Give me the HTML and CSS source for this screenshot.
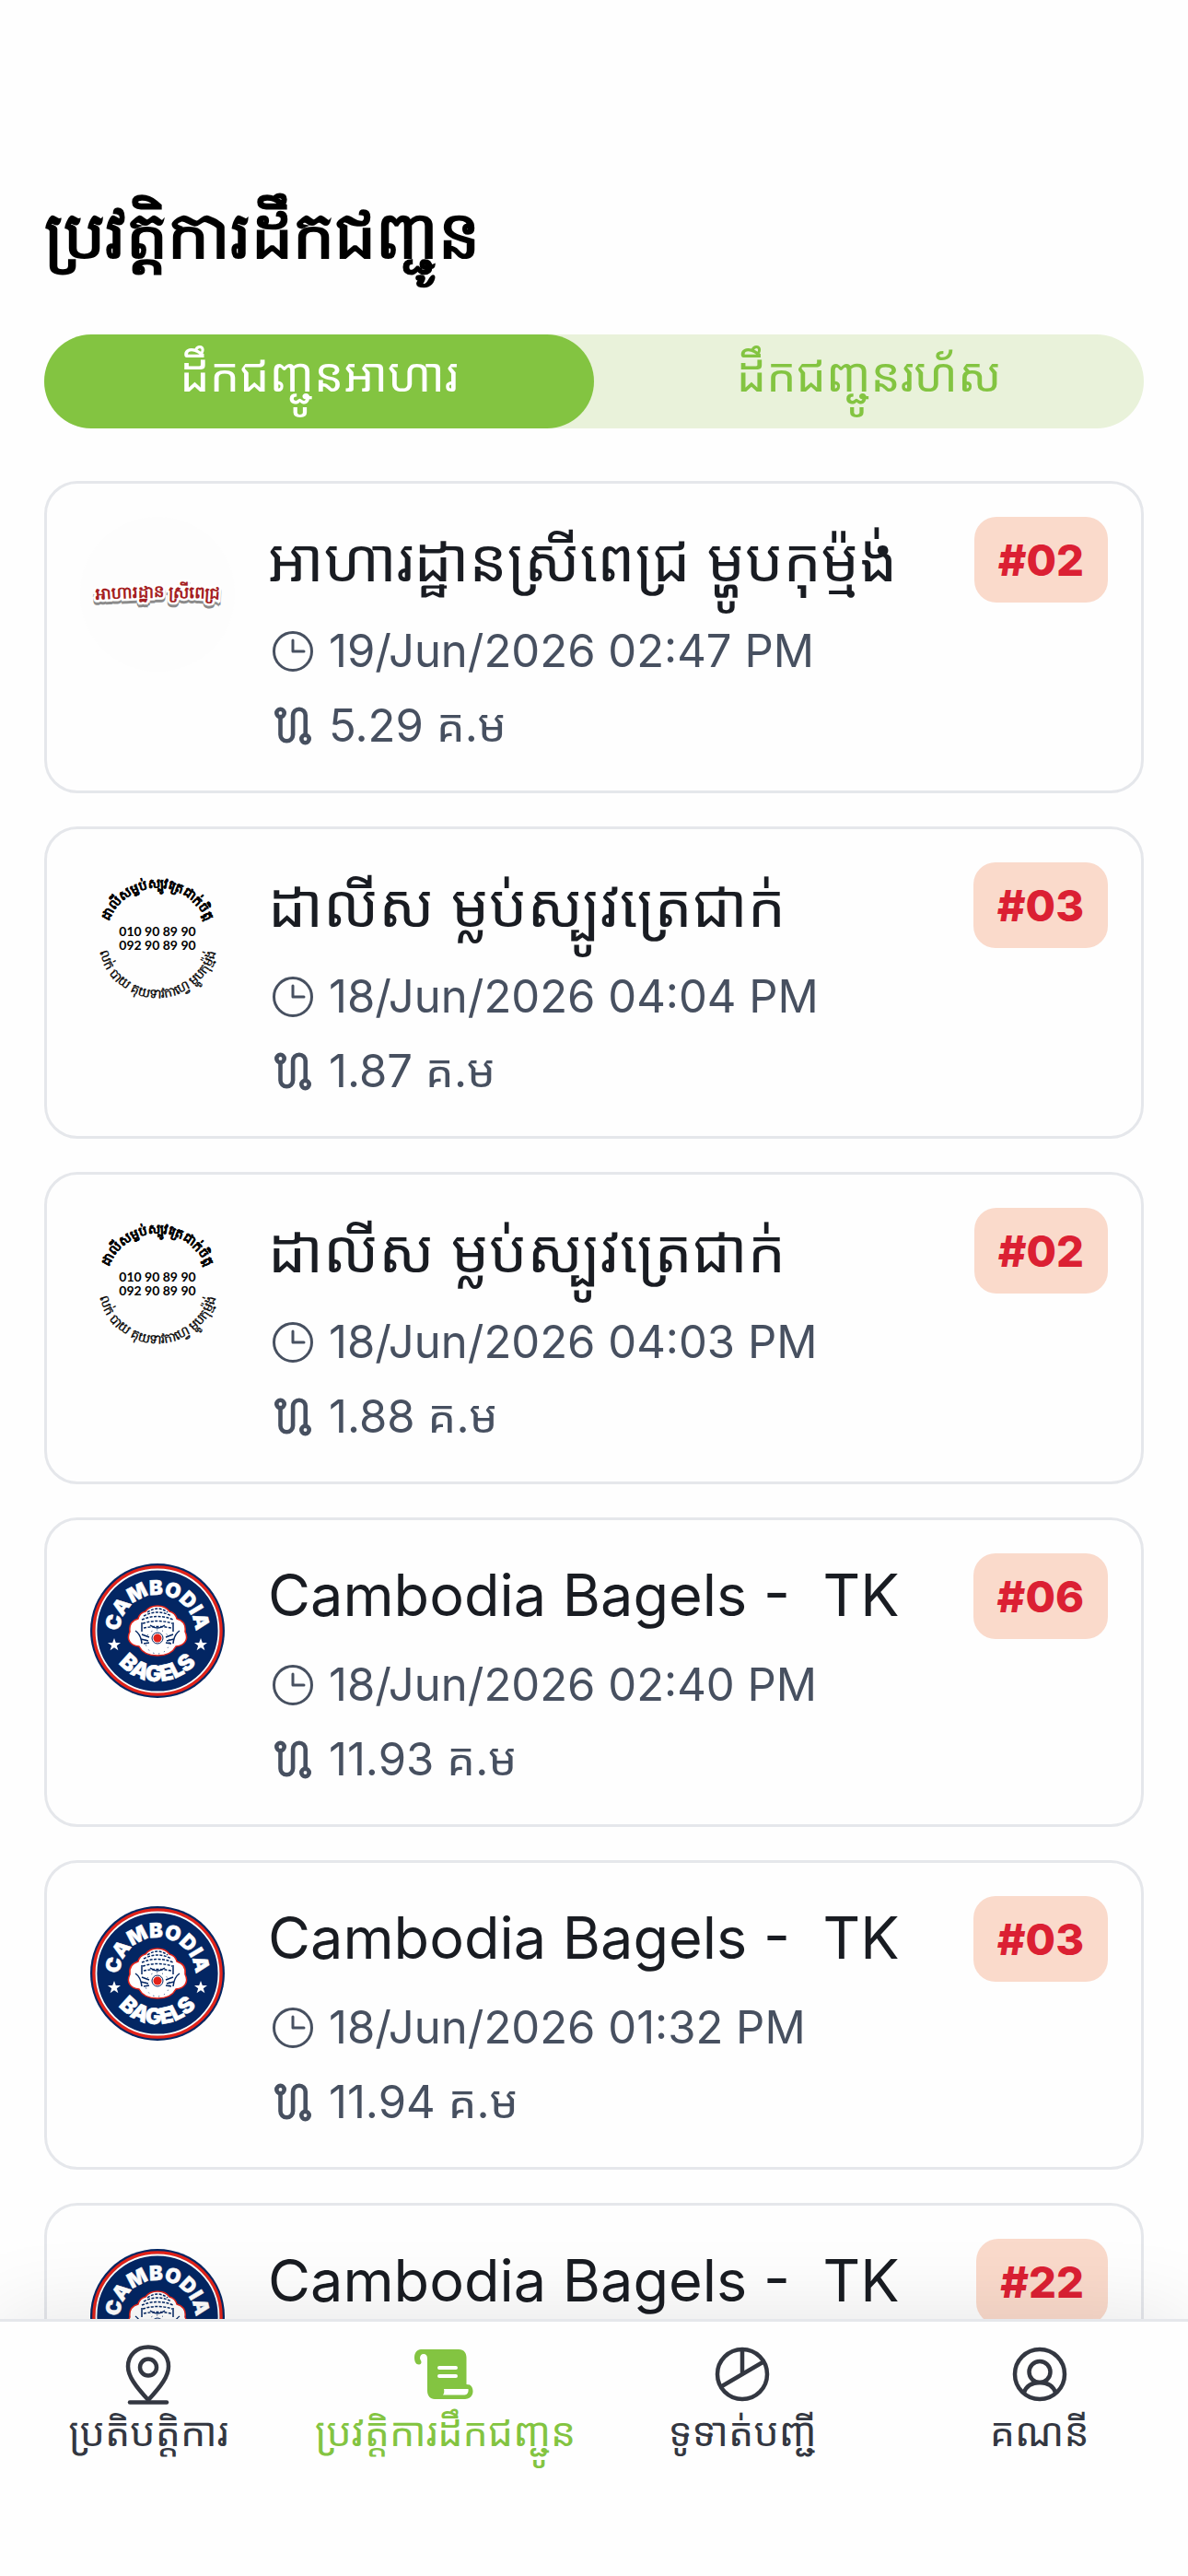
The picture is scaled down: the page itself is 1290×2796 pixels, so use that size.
FILE: index.html
```
<!DOCTYPE html>
<html lang="km">
<head>
<meta charset="utf-8">
<meta name="viewport" content="width=device-width, initial-scale=1">
<title>ប្រវត្តិការដឹកជញ្ជូន</title>
<link rel="stylesheet" href="styles.css">
</head>
<body>
<svg class="sprite" aria-hidden="true">
  <defs>
    <symbol id="clock" viewBox="0 0 48 48">
      <g fill="none" stroke="currentColor" stroke-width="3" stroke-linecap="round" stroke-linejoin="round"><circle cx="24" cy="24" r="20.5"/><path d="M24 12v12h12"/></g>
    </symbol>
    <symbol id="route" viewBox="0 0 48 48">
      <g fill="none" stroke="currentColor" stroke-width="4.6" stroke-linecap="round"><circle cx="10.500" cy="10" r="4.200"/><path d="M10.500 14v19.500a6.800 6.800 0 0 0 13.600 0V12.500a6.800 6.800 0 0 1 13.600 0V34"/><circle cx="37.500" cy="38" r="4.200"/></g>
    </symbol>
    <symbol id="pin" viewBox="0 0 72 72">
      <g fill="none" stroke="currentColor" stroke-width="4.500" stroke-linecap="round" stroke-linejoin="round"><path d="M36 64C22 49 14 38 14 27.500 14 15 23.500 6.500 36 6.500S58 15 58 27.500C58 38 50 49 36 64z"/><circle cx="36" cy="28.500" r="9"/><path d="M16 66.500h40"/></g>
    </symbol>
    <symbol id="scroll" viewBox="2 0 72 72">
      <path fill="currentColor" d="M11 9h41c6 0 8.500 4 8.500 9v29c4.500 0 7 3 7 7.500 0 5-3.500 8.500-8.500 8.500H26c-5 0-8-4-8-9V19c0-3.500-1.500-5-4-5-2.500 0-4 2-4 4.500 0 2 1.500 2.500 1.500 4.500 0 1.500-1 2.500-2.500 2.500C5.500 25.500 4 22 4 18c0-5.500 3-9 7-9z"/>
      <path fill="#fff" d="M31 27h18a2 2 0 0 1 0 4H31a2 2 0 0 1 0-4zM31 36h18a2 2 0 0 1 0 4H31a2 2 0 0 1 0-4zM36 52h26.500c.5 3.500-1 6.500-4 6.500H35c1.500-2 1.500-4 1-6.500z"/>
    </symbol>
    <symbol id="pie" viewBox="0 0 72 72">
      <g fill="none" stroke="currentColor" stroke-width="4.500"><circle cx="36" cy="36" r="27"/><path d="M36 9v27M13 49.500l46-27"/></g>
    </symbol>
    <symbol id="user" viewBox="0 0 72 72">
      <g fill="none" stroke="currentColor" stroke-width="4.500"><circle cx="36" cy="36" r="27"/><circle cx="36" cy="33.500" r="11.500"/><path d="M18.500 56.500C21 49.500 27 45 36 45s15 4.500 17.500 11.500"/></g>
    </symbol>
    <symbol id="logo-pech" viewBox="0 0 168 168">
      <circle cx="84" cy="84" r="84" fill="#fdfdfd"/>
      <path id="pech-arc" d="M4 91Q84 84 164 91" fill="none"/>
      <text class="pech pech-shadow" dy="3"><textPath href="#pech-arc" startOffset="50%">អាហារដ្ឋាន ស្រីពេជ្រ</textPath></text>
      <text class="pech pech-edge"><textPath href="#pech-arc" startOffset="50%">អាហារដ្ឋាន ស្រីពេជ្រ</textPath></text>
      <text class="pech"><textPath href="#pech-arc" startOffset="50%">អាហារដ្ឋាន ស្រីពេជ្រ</textPath></text>
    </symbol>
    <symbol id="logo-dalis" viewBox="0 0 168 168">
      <path id="dalis-top" d="M28 84A56 56 0 0 1 140 84" fill="none"/>
      <path id="dalis-bottom" d="M19 82A65 65 0 0 0 149 82" fill="none"/>
      <text class="dalis dalis-bold"><textPath href="#dalis-top" startOffset="50%">ដាលីសម្លប់ស្បូវត្រេជាក់ចិត្ត</textPath></text>
      <text class="dalis"><textPath href="#dalis-bottom" startOffset="50%">លក់ បាយ គុយទាវកាហ្វេ ម្ហូបកុម្ម៉ង់</textPath></text>
      <text class="phone" x="84" y="80">010 90 89 90</text>
      <text class="phone" x="84" y="95">092 90 89 90</text>
    </symbol>
    <symbol id="logo-bagels" viewBox="0 0 168 168">
      <circle cx="84" cy="84" r="73" fill="#032663"/>
      <circle cx="84" cy="84" r="69" fill="none" stroke="#e2231a" stroke-width="3.500"/>
      <circle cx="84" cy="84" r="66.500" fill="none" stroke="#fff" stroke-width="1.800"/>
      <path id="bagels-top" d="M43 86A41 41 0 0 1 125 86" fill="none"/>
      <path id="bagels-bottom" d="M29 84A55 55 0 0 0 139 84" fill="none"/>
      <text class="bagel bagel-top"><textPath href="#bagels-top" startOffset="50%">CAMBODIA</textPath></text>
      <text class="bagel"><textPath href="#bagels-bottom" startOffset="50%">BAGELS</textPath></text>
      <path fill="#fff" d="M37 92l1.800 5h5.200l-4.200 3.200 1.600 5-4.400-3-4.400 3 1.600-5-4.200-3.200h5.200zM131 92l1.800 5h5.200l-4.200 3.200 1.600 5-4.400-3-4.400 3 1.600-5-4.200-3.200h5.200z"/>
      <path fill="#fff" stroke="#e2231a" stroke-width="1.500" d="M84 57c6 0 10 2 13 6 4 1 7 4 8 8 7 2 10 7 9 14 4 8 0 15-10 16-3 6-10 10-20 10s-17-4-20-10c-10-1-14-8-10-16-1-7 2-12 9-14 1-4 4-7 8-8 3-4 7-6 13-6z"/>
      <g fill="none" stroke="#032663" stroke-width="1.500"><path stroke-dasharray="3 1.500" d="M73 64q11-8 22 0M69 68q15-8 30 0M67 72q17-7 34 0M68 76q16-5 32 0M69 81q15-3 30 0"/><path d="M76 78q8 6 16 0M67 75v10M101 75v10M60 84q6 4 7 14M108 84q-6 4-7 14M67 88l8 3M101 88l-8 3M66 93l8 2M102 93l-8 2M69 98l6-1M99 98l-6-1"/></g>
      <g fill="none" stroke="#032663" stroke-width="1" stroke-dasharray="1 5"><circle cx="84" cy="96" r="13"/></g>
      <circle cx="84" cy="92" r="6" fill="#fff" stroke="#032663" stroke-width="1"/>
      <circle cx="84" cy="92" r="4.500" fill="#e2231a"/>
    </symbol>
  </defs>
</svg>

<main class="page">
  <h1 class="title">ប្រវត្តិការដឹកជញ្ជូន</h1>
  <div class="tabs" role="tablist">
    <button class="tab tab-active" type="button" role="tab" aria-selected="true">ដឹកជញ្ជូនអាហារ</button>
    <button class="tab" type="button" role="tab" aria-selected="false">ដឹកជញ្ជូនរហ័ស</button>
  </div>
  <ul class="list">
    <li class="card">
      <svg class="avatar" aria-hidden="true"><use href="#logo-pech"/></svg>
      <div class="info">
        <h2 class="name name-km">អាហារដ្ឋានស្រីពេជ្រ ម្ហូបកុម្ម៉ង់</h2>
        <p class="meta"><svg class="meta-icon" aria-hidden="true"><use href="#clock"/></svg>19/Jun/2026 02:47 PM</p>
        <p class="meta"><svg class="meta-icon" aria-hidden="true"><use href="#route"/></svg>5.29 គ.ម</p>
      </div>
      <span class="badge">#02</span>
    </li>
    <li class="card">
      <svg class="avatar" aria-hidden="true"><use href="#logo-dalis"/></svg>
      <div class="info">
        <h2 class="name name-km">ដាលីស ម្លប់ស្បូវត្រេជាក់</h2>
        <p class="meta"><svg class="meta-icon" aria-hidden="true"><use href="#clock"/></svg>18/Jun/2026 04:04 PM</p>
        <p class="meta"><svg class="meta-icon" aria-hidden="true"><use href="#route"/></svg>1.87 គ.ម</p>
      </div>
      <span class="badge">#03</span>
    </li>
    <li class="card">
      <svg class="avatar" aria-hidden="true"><use href="#logo-dalis"/></svg>
      <div class="info">
        <h2 class="name name-km">ដាលីស ម្លប់ស្បូវត្រេជាក់</h2>
        <p class="meta"><svg class="meta-icon" aria-hidden="true"><use href="#clock"/></svg>18/Jun/2026 04:03 PM</p>
        <p class="meta"><svg class="meta-icon" aria-hidden="true"><use href="#route"/></svg>1.88 គ.ម</p>
      </div>
      <span class="badge">#02</span>
    </li>
    <li class="card">
      <svg class="avatar" aria-hidden="true"><use href="#logo-bagels"/></svg>
      <div class="info">
        <h2 class="name">Cambodia Bagels -&nbsp; TK</h2>
        <p class="meta"><svg class="meta-icon" aria-hidden="true"><use href="#clock"/></svg>18/Jun/2026 02:40 PM</p>
        <p class="meta"><svg class="meta-icon" aria-hidden="true"><use href="#route"/></svg>11.93 គ.ម</p>
      </div>
      <span class="badge">#06</span>
    </li>
    <li class="card">
      <svg class="avatar" aria-hidden="true"><use href="#logo-bagels"/></svg>
      <div class="info">
        <h2 class="name">Cambodia Bagels -&nbsp; TK</h2>
        <p class="meta"><svg class="meta-icon" aria-hidden="true"><use href="#clock"/></svg>18/Jun/2026 01:32 PM</p>
        <p class="meta"><svg class="meta-icon" aria-hidden="true"><use href="#route"/></svg>11.94 គ.ម</p>
      </div>
      <span class="badge">#03</span>
    </li>
    <li class="card">
      <svg class="avatar" aria-hidden="true"><use href="#logo-bagels"/></svg>
      <div class="info">
        <h2 class="name">Cambodia Bagels -&nbsp; TK</h2>
      </div>
      <span class="badge">#22</span>
    </li>
  </ul>
</main>

<nav class="nav">
  <a class="nav-item" href="#operations"><svg class="nav-icon" aria-hidden="true"><use href="#pin"/></svg>ប្រតិបត្តិការ</a>
  <a class="nav-item nav-active" href="#history" aria-current="page"><svg class="nav-icon" aria-hidden="true"><use href="#scroll"/></svg>ប្រវត្តិការដឹកជញ្ជូន</a>
  <a class="nav-item" href="#payments"><svg class="nav-icon" aria-hidden="true"><use href="#pie"/></svg>ទូទាត់បញ្ជី</a>
  <a class="nav-item" href="#account"><svg class="nav-icon" aria-hidden="true"><use href="#user"/></svg>គណនី</a>
</nav>
</body>
</html>
```

FILE: styles.css
```
* { box-sizing: border-box; margin: 0; padding: 0; }

body {
  height: 100vh;
  display: flex;
  flex-direction: column;
  overflow: hidden;
  background: #fefefe;
  color: #191c22;
  font-family: Inter, "Noto Sans Khmer", sans-serif;
}

.sprite { position: absolute; width: 0; height: 0; }

.page {
  flex: 1;
  min-height: 0;
  overflow: hidden;
  padding: 204px 48px 0;
}

.title {
  height: 108px;
  font-family: "Noto Sans", sans-serif;
  font-size: 71px;
  line-height: 98px;
  font-weight: 700;
  color: #000;
  white-space: nowrap;
}

.tabs {
  display: flex;
  height: 102px;
  margin: 51px 0 57px;
  border-radius: 51px;
  background: #e9f2da;
}

.tab {
  flex: 1;
  border: 0;
  border-radius: 51px;
  background: none;
  color: #83c441;
  font-family: inherit;
  font-size: 51px;
  line-height: 88px;
  padding-bottom: 14px;
}

.tab-active { background: #83c441; color: #fff; }

.list {
  display: flex;
  flex-direction: column;
  gap: 36px;
  list-style: none;
}

.card {
  display: flex;
  align-items: flex-start;
  gap: 36px;
  padding: 36px 36px 30px;
  border: 3px solid #e5e7eb;
  border-radius: 36px;
  background: #fefefe;
}

.avatar { flex: none; width: 168px; height: 168px; }

.info { flex: 1; min-width: 0; }

.name {
  margin-bottom: 12px;
  font-size: 63px;
  line-height: 90px;
  font-weight: 400;
  white-space: nowrap;
}

.name-km { font-size: 65px; line-height: 93px; }

.meta {
  display: flex;
  align-items: center;
  gap: 15px;
  height: 81px;
  padding-left: 3px;
  font-size: 49px;
  line-height: 81px;
  color: #475060;
}

.meta-icon { width: 48px; height: 48px; }

.badge {
  padding: 0 26px;
  border-radius: 24px;
  background: #fadacb;
  color: #db2033;
  font-size: 47px;
  line-height: 93px;
  font-weight: 800;
}

.nav {
  position: relative;
  flex: none;
  display: grid;
  grid-template-columns: repeat(4, 1fr);
  padding: 21px 0 130px;
  border-top: 3px solid #e5e7eb;
  background: #fefefe;
  box-shadow: 0 0 90px rgba(0, 0, 0, 0.1);
}

.nav-item {
  display: flex;
  flex-direction: column;
  align-items: center;
  color: #333741;
  font-size: 43px;
  line-height: 53px;
  text-decoration: none;
  white-space: nowrap;
}

.nav-active { color: #83c441; }

.nav-icon { width: 72px; height: 72px; }

.pech { font-family: "Noto Sans", sans-serif; font-size: 18px; font-weight: 700; text-anchor: middle; fill: #a51e22; }
.pech-edge { stroke: #fff; stroke-width: 5; }
.pech-shadow { stroke: #8b8b8b; stroke-width: 5; }

.dalis { font-family: "Noto Sans", sans-serif; font-size: 14px; text-anchor: middle; fill: #000; stroke: #000; stroke-width: 0.3px; }
.dalis-bold { font-weight: 700; }
.phone { font-family: Lato, sans-serif; font-size: 14px; font-weight: 700; text-anchor: middle; fill: #000; }

.bagel { font-size: 24px; font-weight: 900; text-anchor: middle; fill: #fff; stroke: #fff; stroke-width: 0.5px; }
.bagel-top { font-size: 22px; }
```
